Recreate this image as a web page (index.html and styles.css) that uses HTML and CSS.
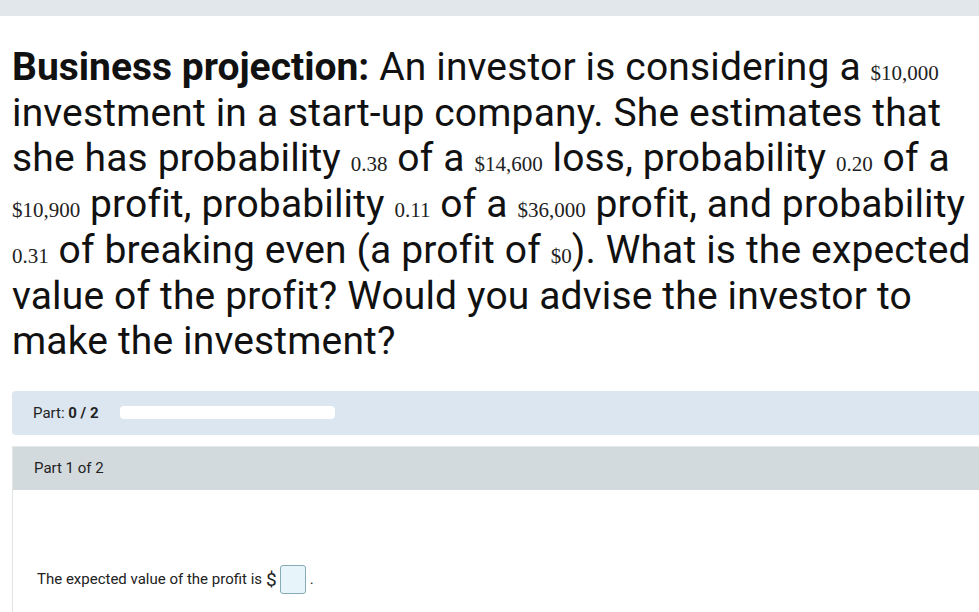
FILE: index.html
```html
<!DOCTYPE html>
<html>
<head>
<meta charset="utf-8">
<link rel="stylesheet" href="styles.css">
</head>
<body>
<div class="topbar"></div>
<div class="page">
  <p class="question"><b>Business projection:</b> An investor is considering a <span class="m">$10,000</span> investment in a start-up company. She estimates that she has probability <span class="m">0.38</span> of a <span class="m">$14,600</span> loss, probability <span class="m">0.20</span> of a <span class="m">$10,900</span> profit, probability <span class="m">0.11</span> of a <span class="m">$36,000</span> profit, and probability <span class="m">0.31</span> of breaking even (a profit of <span class="m">$0</span>). What is the expected value of the profit? Would you advise the investor to make the investment?</p>
  <div class="partbar">
    <span class="partlabel">Part: <b>0 / 2</b></span>
    <span class="progress"></span>
  </div>
  <div class="panel">
    <div class="panelhead">Part 1 of 2</div>
    <div class="panelbody">
      <span class="answer">The expected value of the profit is <span class="dollar">$</span><span class="box"></span>.</span>
    </div>
  </div>
</div>
</body>
</html>
```

FILE: styles.css
```css
html, body {
  margin: 0;
  padding: 0;
  background: #ffffff;
  font-family: Roboto, "Liberation Sans", sans-serif;
  color: #111;
  overflow: hidden;
}
.topbar {
  height: 16px;
  background: #e1e7ea;
}
.page {
  padding-left: 12px;
}
.question {
  margin: 29px 0 0 0;
  font-size: 39px;
  line-height: 45.7px;
  letter-spacing: 0.15px;
  color: #111;
}
.question b {
  font-weight: 700;
  letter-spacing: 0;
}
.m {
  font-family: "Liberation Serif", "Times New Roman", serif;
  font-size: 21px;
  line-height: 1;
  letter-spacing: 0;
  color: #222;
}
.partbar {
  margin-top: 26px;
  height: 44px;
  background: #dbe6f0;
  border-radius: 4px 0 0 4px;
  display: flex;
  align-items: center;
  padding-left: 21px;
  gap: 21px;
}
.partlabel {
  font-size: 15px;
  color: #222;
}
.partlabel b {
  font-weight: 700;
}
.progress {
  width: 215px;
  height: 13px;
  background: #ffffff;
  border-radius: 4px;
}
.panel {
  margin-top: 11px;
  border-top: 1px solid #e3e8e8;
  border-left: 1px solid #e2e5e5;
}
.panelhead {
  height: 43px;
  background: #d3dadd;
  display: flex;
  align-items: center;
  padding-left: 21px;
  font-size: 15px;
  color: #222;
}
.panelbody {
  height: 140px;
  padding-left: 24px;
  padding-top: 75px;
  box-sizing: border-box;
}
.answer {
  font-size: 15px;
  color: #222;
  display: inline-flex;
  align-items: center;
}
.dollar {
  font-size: 19px;
  margin-left: 4px;
  margin-right: 3px;
}
.box {
  display: inline-block;
  width: 24px;
  height: 27px;
  border: 1px solid #86aab6;
  background: #e7f4f9;
  border-radius: 3px;
  margin-right: 4px;
}
```
